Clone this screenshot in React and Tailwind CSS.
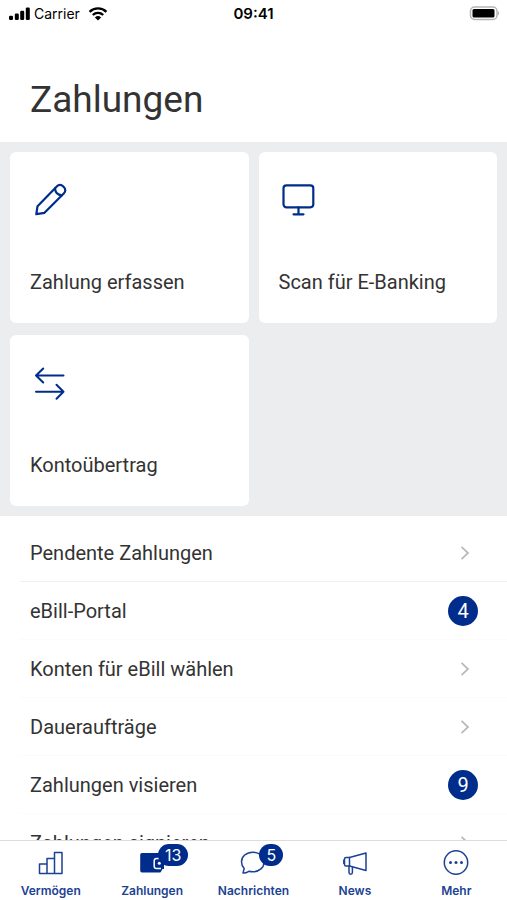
import clsx from 'clsx'

const TILES = [
  { label: 'Zahlung erfassen', Icon: PencilIcon },
  { label: 'Scan für E-Banking', Icon: MonitorIcon },
  { label: 'Kontoübertrag', Icon: TransferIcon },
]

const ROWS = [
  { label: 'Pendente Zahlungen' },
  { label: 'eBill-Portal', count: 4 },
  { label: 'Konten für eBill wählen' },
  { label: 'Daueraufträge' },
  { label: 'Zahlungen visieren', count: 9 },
  { label: 'Zahlungen signieren' },
]

const TABS = [
  { label: 'Vermögen', Icon: BarsIcon },
  { label: 'Zahlungen', Icon: WalletIcon, count: 13, active: true },
  { label: 'Nachrichten', Icon: BubbleIcon, count: 5 },
  { label: 'News', Icon: MegaphoneIcon },
  { label: 'Mehr', Icon: MoreIcon },
]

function PencilIcon() {
  return (
    <svg viewBox="0 0 40 40" className="size-10" fill="none" stroke="currentColor" strokeWidth="2.2" strokeLinejoin="round" strokeLinecap="round">
      <path d="M6.300 34.200 7.500 26.200 27 6.200a4.200 4.200 0 0 1 6 0l1 1a4.200 4.200 0 0 1 0 6L14.500 32.800Z" />
      <path d="M25 8.300c.3 3.800 2.800 6.500 6.800 7" />
    </svg>
  )
}

function MonitorIcon() {
  return (
    <svg viewBox="0 0 40 40" className="size-10" fill="none" stroke="currentColor" strokeWidth="2.200" strokeLinecap="round">
      <rect x="4.500" y="5.300" width="29.800" height="22" rx="3" />
      <path d="M19.500 27.300v6.500M14.500 34.300h10" />
    </svg>
  )
}

function TransferIcon() {
  return (
    <svg viewBox="0 0 40 40" className="size-10" fill="none" stroke="currentColor" strokeWidth="2" strokeLinecap="round" strokeLinejoin="round">
      <path d="M33.500 12.500H6M13.200 5.500l-7.200 7 7.200 7M6 28.700h27.500M26.500 21.700l7 7-7 7" />
    </svg>
  )
}

function BarsIcon() {
  return (
    <svg viewBox="0 0 28 28" className="size-7" fill="none" stroke="currentColor" strokeWidth="1.5" strokeLinejoin="round">
      <path d="M2.500 15h7.500v9.500H2.500ZM10 9.500h7.500v15H10ZM17.500 3.500H25v21h-7.500Z" />
    </svg>
  )
}

function WalletIcon() {
  return (
    <svg viewBox="0 0 28 28" className="size-7" fill="currentColor">
      <path d="M4 4h18.500a1.800 1.800 0 0 1 1.800 1.800v15.900a1.800 1.800 0 0 1-1.800 1.800H4a1.800 1.800 0 0 1-1.800-1.800V5.800A1.800 1.800 0 0 1 4 4Z" />
      <path d="M19 9.500h7V20h-7Z" />
      <path d="M26.500 20.500v4h-4v-1l1.800-3Z" fill="white" />
      <path d="M22 9.500h-3.500a2.300 2.300 0 0 0-2.300 2.300v5.400a2.300 2.300 0 0 0 2.300 2.300h4.500" fill="none" stroke="white" strokeWidth="1.500" />
      <circle cx="21.300" cy="14.300" r="1.500" fill="white" />
    </svg>
  )
}

function BubbleIcon() {
  return (
    <svg viewBox="0 0 28 28" className="size-7" fill="none" stroke="currentColor" strokeWidth="1.500" strokeLinejoin="round">
      <path d="M13.800 3.200C7.300 3.200 2.500 7.400 2.500 12.800c0 2.700 1.100 5 2.700 6.700L4 24c2.300 0 4.300-.600 5.800-1.700 1.300.300 2.600.500 4 .500 6.500 0 11.300-4.400 11.300-9.900s-4.800-9.700-11.300-9.700Z" />
    </svg>
  )
}

function MegaphoneIcon() {
  return (
    <svg viewBox="0 0 28 28" className="size-7" fill="none" stroke="currentColor" strokeWidth="1.500" strokeLinejoin="round" strokeLinecap="round">
      <path d="M8.500 8.500 25 4v17.500L8.500 17Z" />
      <path d="M8.500 8.500H5A1.500 1.500 0 0 0 3.500 10v5.500A1.500 1.500 0 0 0 5 17h3.500M3.500 11H2.800v3.500h.7" />
      <path d="M8 17.200v6.300a1.700 1.700 0 0 0 3.400 0v-5.500" />
    </svg>
  )
}

function MoreIcon() {
  return (
    <svg viewBox="0 0 28 28" className="size-7">
      <circle cx="14" cy="13.500" r="11.700" fill="none" stroke="currentColor" strokeWidth="1.500" />
      <g fill="currentColor">
        <circle cx="8.500" cy="13.500" r="1.500" />
        <circle cx="14" cy="13.500" r="1.500" />
        <circle cx="19.500" cy="13.500" r="1.500" />
      </g>
    </svg>
  )
}

function StatusBar() {
  return (
    <div className="grid grid-cols-3 items-center px-2 pt-1 font-[Inter,sans-serif] text-sm text-black">
      <div className="flex items-center gap-1">
        <svg viewBox="0 0 22 14" className="h-3.5 w-[22px]" fill="currentColor">
          <rect x="1" y="8.700" width="4" height="4.300" rx="1.200" />
          <rect x="6.800" y="6.500" width="4" height="6.500" rx="1.200" />
          <rect x="12.200" y="3.700" width="4" height="9.300" rx="1.200" />
          <rect x="17.800" y=".5" width="4" height="12.500" rx="1.200" />
        </svg>
        <span className="mr-1">Carrier</span>
        <svg viewBox="0 0 20 14" className="h-3.5 w-5" fill="none" stroke="currentColor" strokeWidth="2.400">
          <path d="M1.600 4.800a12 12 0 0 1 16.800 0M4.800 8a7.500 7.500 0 0 1 10.400 0" />
          <path d="M10 13.500 6.900 10.500a4.500 4.500 0 0 1 6.200 0Z" fill="currentColor" stroke="none" />
        </svg>
      </div>
      <span className="text-center text-[15px] leading-5 font-semibold">09:41</span>
      <svg viewBox="0 0 32 16" className="h-4 w-8 justify-self-end">
        <rect x="3.500" y="1" width="26.500" height="12.500" rx="4" fill="none" stroke="#b5b5b5" strokeWidth="1.500" />
        <path d="M31 5.300a2.300 2.300 0 0 1 0 4Z" fill="#b5b5b5" />
        <rect x="5.500" y="3" width="22" height="8.500" rx="1.500" />
      </svg>
    </div>
  )
}

function Chevron() {
  return (
    <svg viewBox="0 0 10 16" className="mr-2 h-4 w-2.5" fill="none" stroke="#b8babc" strokeWidth="1.800">
      <path d="m1.500 1.800 6.500 6.200-6.500 6.200" />
    </svg>
  )
}

export default function App() {
  return (
    <div className="flex h-dvh flex-col bg-white font-[Roboto,sans-serif] text-[#333333]">
      <header className="h-[142px] shrink-0">
        <StatusBar />
        <h1 className="mt-[50px] px-[30px] text-[37px] leading-[52px]">Zahlungen</h1>
      </header>

      <main className="min-h-0 flex-1 overflow-y-auto [scrollbar-width:none]">
        <section className="grid grid-cols-2 gap-x-2.5 gap-y-3 bg-[#ebedee] p-2.5">
          {TILES.map(({ label, Icon }) => (
            <button
              key={label}
              type="button"
              className="flex h-[171px] flex-col items-start justify-between rounded-md bg-white px-5 pt-7 pb-[27px] text-left text-xl"
            >
              <span className="text-[#002d8c]">
                <Icon />
              </span>
              {label}
            </button>
          ))}
        </section>

        <ul className="pt-2 pl-5">
          {ROWS.map(({ label, count }, i) => (
            <li key={label} className={clsx('border-b', i === 0 ? 'border-[#f0f0f0]' : 'border-[#fbfbfb]')}>
              <a href="#" className="flex h-[57px] items-center justify-between pr-[29px] pl-2.5 text-xl">
                {label}
                {count ? (
                  <span className="flex size-[30px] items-center justify-center rounded-full bg-[#002d8c] text-white">
                    {count}
                  </span>
                ) : (
                  <Chevron />
                )}
              </a>
            </li>
          ))}
        </ul>
      </main>

      <nav className="grid h-[60px] shrink-0 grid-cols-5 border-t border-[#dcdcdc] bg-white font-[Inter,sans-serif]">
        {TABS.map(({ label, Icon, count, active }) => (
          <a
            key={label}
            href="#"
            aria-current={active ? 'page' : undefined}
            className="flex flex-col items-center pt-2 text-xs font-semibold text-[#1b4293]"
          >
            <span className={clsx('relative mb-1.5', active && 'text-[#002d8c]')}>
              <Icon />
              {count && (
                <span className="absolute -top-[5px] left-5 flex h-[22px] min-w-[22px] items-center justify-center rounded-full bg-[#002d8c] px-[7px] text-base font-normal text-white">
                  {count}
                </span>
              )}
            </span>
            {label}
          </a>
        ))}
      </nav>
    </div>
  )
}
